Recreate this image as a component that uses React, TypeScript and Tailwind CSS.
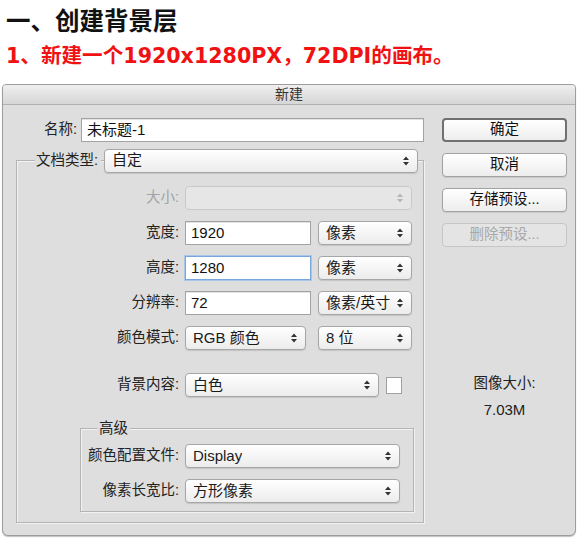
import React from "react";

const FONT = '"Liberation Sans", "Noto Sans CJK SC", sans-serif';

function Arrows({ faded = false }: { faded?: boolean }) {
  return (
    <svg width="6" height="10" viewBox="0 0 6 10" className="shrink-0">
      <path d="M0 4 L3 0.5 L6 4 Z M0 6 L3 9.5 L6 6 Z" fill={faded ? "#b5b5b5" : "#333"} />
    </svg>
  );
}

function Select({
  value,
  width,
  disabled = false,
}: {
  value: string;
  width: string;
  disabled?: boolean;
}) {
  return (
    <div
      className={`${width} h-[24px] flex items-center justify-between pl-[7px] pr-[8px] rounded-[4px] border text-[15px] ${
        disabled
          ? "border-[#c9c9c9] bg-[#e6e6e6] text-[#aaa]"
          : "border-[#a6a6a6] bg-linear-to-b from-white to-[#ececec] text-[#1a1a1a] shadow-[0_1px_1px_rgba(0,0,0,0.12)]"
      }`}
    >
      <span className="truncate">{value}</span>
      <Arrows faded={disabled} />
    </div>
  );
}

function Input({ value, width, focused = false }: { value: string; width: string; focused?: boolean }) {
  return (
    <div
      className={`${width} h-[24px] flex items-center px-[5px] bg-white text-[15px] text-[#111] border ${
        focused ? "border-[#78a6db] shadow-[0_0_0_1px_#a8c7ec]" : "border-[#a3a3a3] shadow-[inset_0_1px_0_#e2e2e2]"
      }`}
    >
      {value}
    </div>
  );
}

function Label({ text, width, disabled = false }: { text: string; width: string; disabled?: boolean }) {
  return (
    <span
      className={`${width} shrink-0 whitespace-nowrap text-right mr-[6px] text-[14.5px] ${
        disabled ? "text-[#a3a3a3]" : "text-[#222]"
      }`}
    >
      {text}
    </span>
  );
}

function Button({ text, primary = false, disabled = false }: { text: string; primary?: boolean; disabled?: boolean }) {
  return (
    <div
      className={`h-[24px] flex items-center justify-center rounded-[4px] text-[14.5px] ${
        primary
          ? "border-2 border-[#707070] bg-linear-to-b from-white to-[#ededed] text-[#111]"
          : disabled
          ? "border border-[#c6c6c6] bg-[#e4e4e4] text-[#a8a8a8]"
          : "border border-[#a2a2a2] bg-linear-to-b from-white to-[#ededed] text-[#111] shadow-[0_1px_1px_rgba(0,0,0,0.1)]"
      }`}
    >
      {text}
    </div>
  );
}

export default function App() {
  return (
    <div className="w-[578px] h-[538px] bg-white overflow-hidden" style={{ fontFamily: FONT }}>
      <h1
        className="pl-[6px] pt-[4px] text-[24.5px] leading-[32px] font-bold text-[#111]"
        style={{ fontFamily: '"Noto Sans CJK SC", sans-serif' }}
      >
        一、创建背景层
      </h1>
      <p
        className="pl-[6px] mt-[7px] text-[20.6px] leading-[26px] font-bold text-[#f01212] whitespace-nowrap"
        style={{ fontFamily: '"DejaVu Sans", "Noto Sans CJK SC", sans-serif' }}
      >
        1、新建一个1920x1280PX，72DPI的画布。
      </p>

      <div className="mt-[15px] ml-[2px] w-[574px] h-[452px] border border-[#9e9e9e] rounded-t-[4px] rounded-b-[6px] bg-[#dedede] shadow-[0_1px_1px_rgba(0,0,0,0.25)] overflow-hidden">
        <div className="h-[20px] flex items-center justify-center text-[14px] text-[#333] bg-linear-to-b from-[#efefef] to-[#d6d6d6] border-b border-[#b0b0b0]">
          新建
        </div>

        <div className="flex pl-[13px] pt-[13px]">
          {/* left column */}
          <div className="w-[408px]">
            <div className="flex items-center h-[24px]">
              <span className="w-[61px] text-right mr-[4px] text-[14.5px] text-[#222]">名称:</span>
              <Input value="未标题-1" width="w-[343px]" />
            </div>

            <div className="mt-[18px] border border-[#b4b4b4] shadow-[inset_1px_1px_0_#f2f2f2,1px_1px_0_#f2f2f2] pb-[10px]">
              <div className="-mt-[12px] flex items-center h-[23px]">
                <span className="ml-[18px] w-[66px] px-[1px] whitespace-nowrap bg-[#dedede] text-[14.5px] text-[#222]">
                  文档类型:
                </span>
                <div className="ml-[3px]">
                  <Select value="自定" width="w-[314px]" />
                </div>
              </div>

              <div className="mt-[14px] flex flex-col gap-[11px]">
                <div className="flex items-center h-[24px]">
                  <Label text="大小:" width="w-[162px]" disabled />
                  <Select value="" width="w-[227px]" disabled />
                </div>
                <div className="flex items-center h-[24px]">
                  <Label text="宽度:" width="w-[162px]" />
                  <Input value="1920" width="w-[126px]" />
                  <div className="ml-[7px]">
                    <Select value="像素" width="w-[94px]" />
                  </div>
                </div>
                <div className="flex items-center h-[24px]">
                  <Label text="高度:" width="w-[162px]" />
                  <Input value="1280" width="w-[126px]" focused />
                  <div className="ml-[7px]">
                    <Select value="像素" width="w-[94px]" />
                  </div>
                </div>
                <div className="flex items-center h-[24px]">
                  <Label text="分辨率:" width="w-[162px]" />
                  <Input value="72" width="w-[126px]" />
                  <div className="ml-[7px]">
                    <Select value="像素/英寸" width="w-[94px]" />
                  </div>
                </div>
                <div className="flex items-center h-[24px]">
                  <Label text="颜色模式:" width="w-[162px]" />
                  <Select value="RGB 颜色" width="w-[121px]" />
                  <div className="ml-[12px]">
                    <Select value="8 位" width="w-[94px]" />
                  </div>
                </div>
              </div>

              <div className="mt-[23px] flex items-center h-[24px]">
                <Label text="背景内容:" width="w-[162px]" />
                <Select value="白色" width="w-[194px]" />
                <div className="ml-[7px] w-[16px] h-[17px] bg-white border border-[#a0a0a0]" />
              </div>

              <div className="mt-[31px] ml-[63px] w-[334px] border border-[#b4b4b4] shadow-[inset_1px_1px_0_#f2f2f2,1px_1px_0_#f2f2f2] pb-[8px]">
                <div className="-mt-[10px] ml-[16px] w-fit px-[2px] bg-[#dedede] text-[14.5px] leading-[18px] text-[#222]">
                  高级
                </div>
                <div className="mt-[7px] flex items-center h-[24px]">
                  <Label text="颜色配置文件:" width="w-[98px]" />
                  <Select value="Display" width="w-[215px]" />
                </div>
                <div className="mt-[11px] flex items-center h-[24px]">
                  <Label text="像素长宽比:" width="w-[98px]" />
                  <Select value="方形像素" width="w-[215px]" />
                </div>
              </div>
            </div>
          </div>

          {/* right column */}
          <div className="ml-[18px] w-[125px] flex flex-col">
            <div className="flex flex-col gap-[11px]">
              <Button text="确定" primary />
              <Button text="取消" />
              <Button text="存储预设..." />
              <Button text="删除预设..." disabled />
            </div>
            <div className="mt-[127px] text-center text-[14.5px] leading-[18px] text-[#222]">图像大小:</div>
            <div className="mt-[9px] text-center text-[15px] leading-[18px] text-[#222]">7.03M</div>
          </div>
        </div>
      </div>
    </div>
  );
}
